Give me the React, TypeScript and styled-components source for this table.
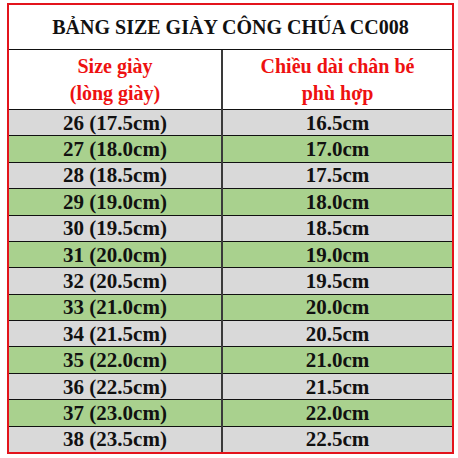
import React from "react";
import styled, { createGlobalStyle } from "styled-components";

const Global = createGlobalStyle`
  html, body { margin: 0; padding: 0; background: #ffffff; }
  body { font-family: "Liberation Serif", "Times New Roman", serif; }
`;

const Page = styled.div`
  width: 458px;
  height: 458px;
  padding: 3px 0 0 7px;
  box-sizing: border-box;
`;

const Sheet = styled.div`
  width: 447px;
  border: 2px solid #e3141c;
  box-sizing: border-box;
  display: flex;
  flex-direction: column;
  font-weight: bold;
  color: #111;
`;

const Title = styled.div`
  height: 45px;
  border-bottom: 1px solid #111;
  display: flex;
  align-items: center;
  justify-content: center;
  font-size: 20px;
  padding-top: 1px;
  box-sizing: border-box;
`;

const Grid = styled.div`
  display: grid;
  grid-template-columns: 212px 229px;
  column-gap: 2px;
  background: #3a3a3a;
`;

const HeadCell = styled.div`
  height: 59px;
  background: #ffffff;
  color: #ee1111;
  font-size: 20px;
  line-height: 27px;
  text-align: center;
  display: flex;
  flex-direction: column;
  justify-content: center;
  padding-top: 1px;
  box-sizing: border-box;
`;

const Body = styled.div`
  grid-column: 1 / -1;
  display: grid;
  grid-template-columns: 212px 229px;
  grid-template-rows: repeat(13, 1fr);
  column-gap: 2px;
  height: 343px;
  background: #3a3a3a;
`;

const Cell = styled.div<{ $green: boolean }>`
  background: ${(p) => (p.$green ? "#a9d18e" : "#d9d9d9")};
  border-top: 1px solid #111;
  display: flex;
  align-items: center;
  justify-content: center;
  font-size: 21px;
  line-height: 1;
  padding-top: 1px;
  box-sizing: border-box;
`;

const rows: [string, string][] = [
  ["26 (17.5cm)", "16.5cm"],
  ["27 (18.0cm)", "17.0cm"],
  ["28 (18.5cm)", "17.5cm"],
  ["29 (19.0cm)", "18.0cm"],
  ["30 (19.5cm)", "18.5cm"],
  ["31 (20.0cm)", "19.0cm"],
  ["32 (20.5cm)", "19.5cm"],
  ["33 (21.0cm)", "20.0cm"],
  ["34 (21.5cm)", "20.5cm"],
  ["35 (22.0cm)", "21.0cm"],
  ["36 (22.5cm)", "21.5cm"],
  ["37 (23.0cm)", "22.0cm"],
  ["38 (23.5cm)", "22.5cm"],
];

export default function App() {
  return (
    <>
      <Global />
      <Page>
        <Sheet>
          <Title>BẢNG SIZE GIÀY CÔNG CHÚA CC008</Title>
          <Grid>
            <HeadCell>
              <span>Size giày</span>
              <span>(lòng giày)</span>
            </HeadCell>
            <HeadCell>
              <span>Chiều dài chân bé</span>
              <span>phù hợp</span>
            </HeadCell>
            <Body>
              {rows.map(([a, b], i) => (
                <React.Fragment key={a}>
                  <Cell $green={i % 2 === 1}>{a}</Cell>
                  <Cell $green={i % 2 === 1}>{b}</Cell>
                </React.Fragment>
              ))}
            </Body>
          </Grid>
        </Sheet>
      </Page>
    </>
  );
}
